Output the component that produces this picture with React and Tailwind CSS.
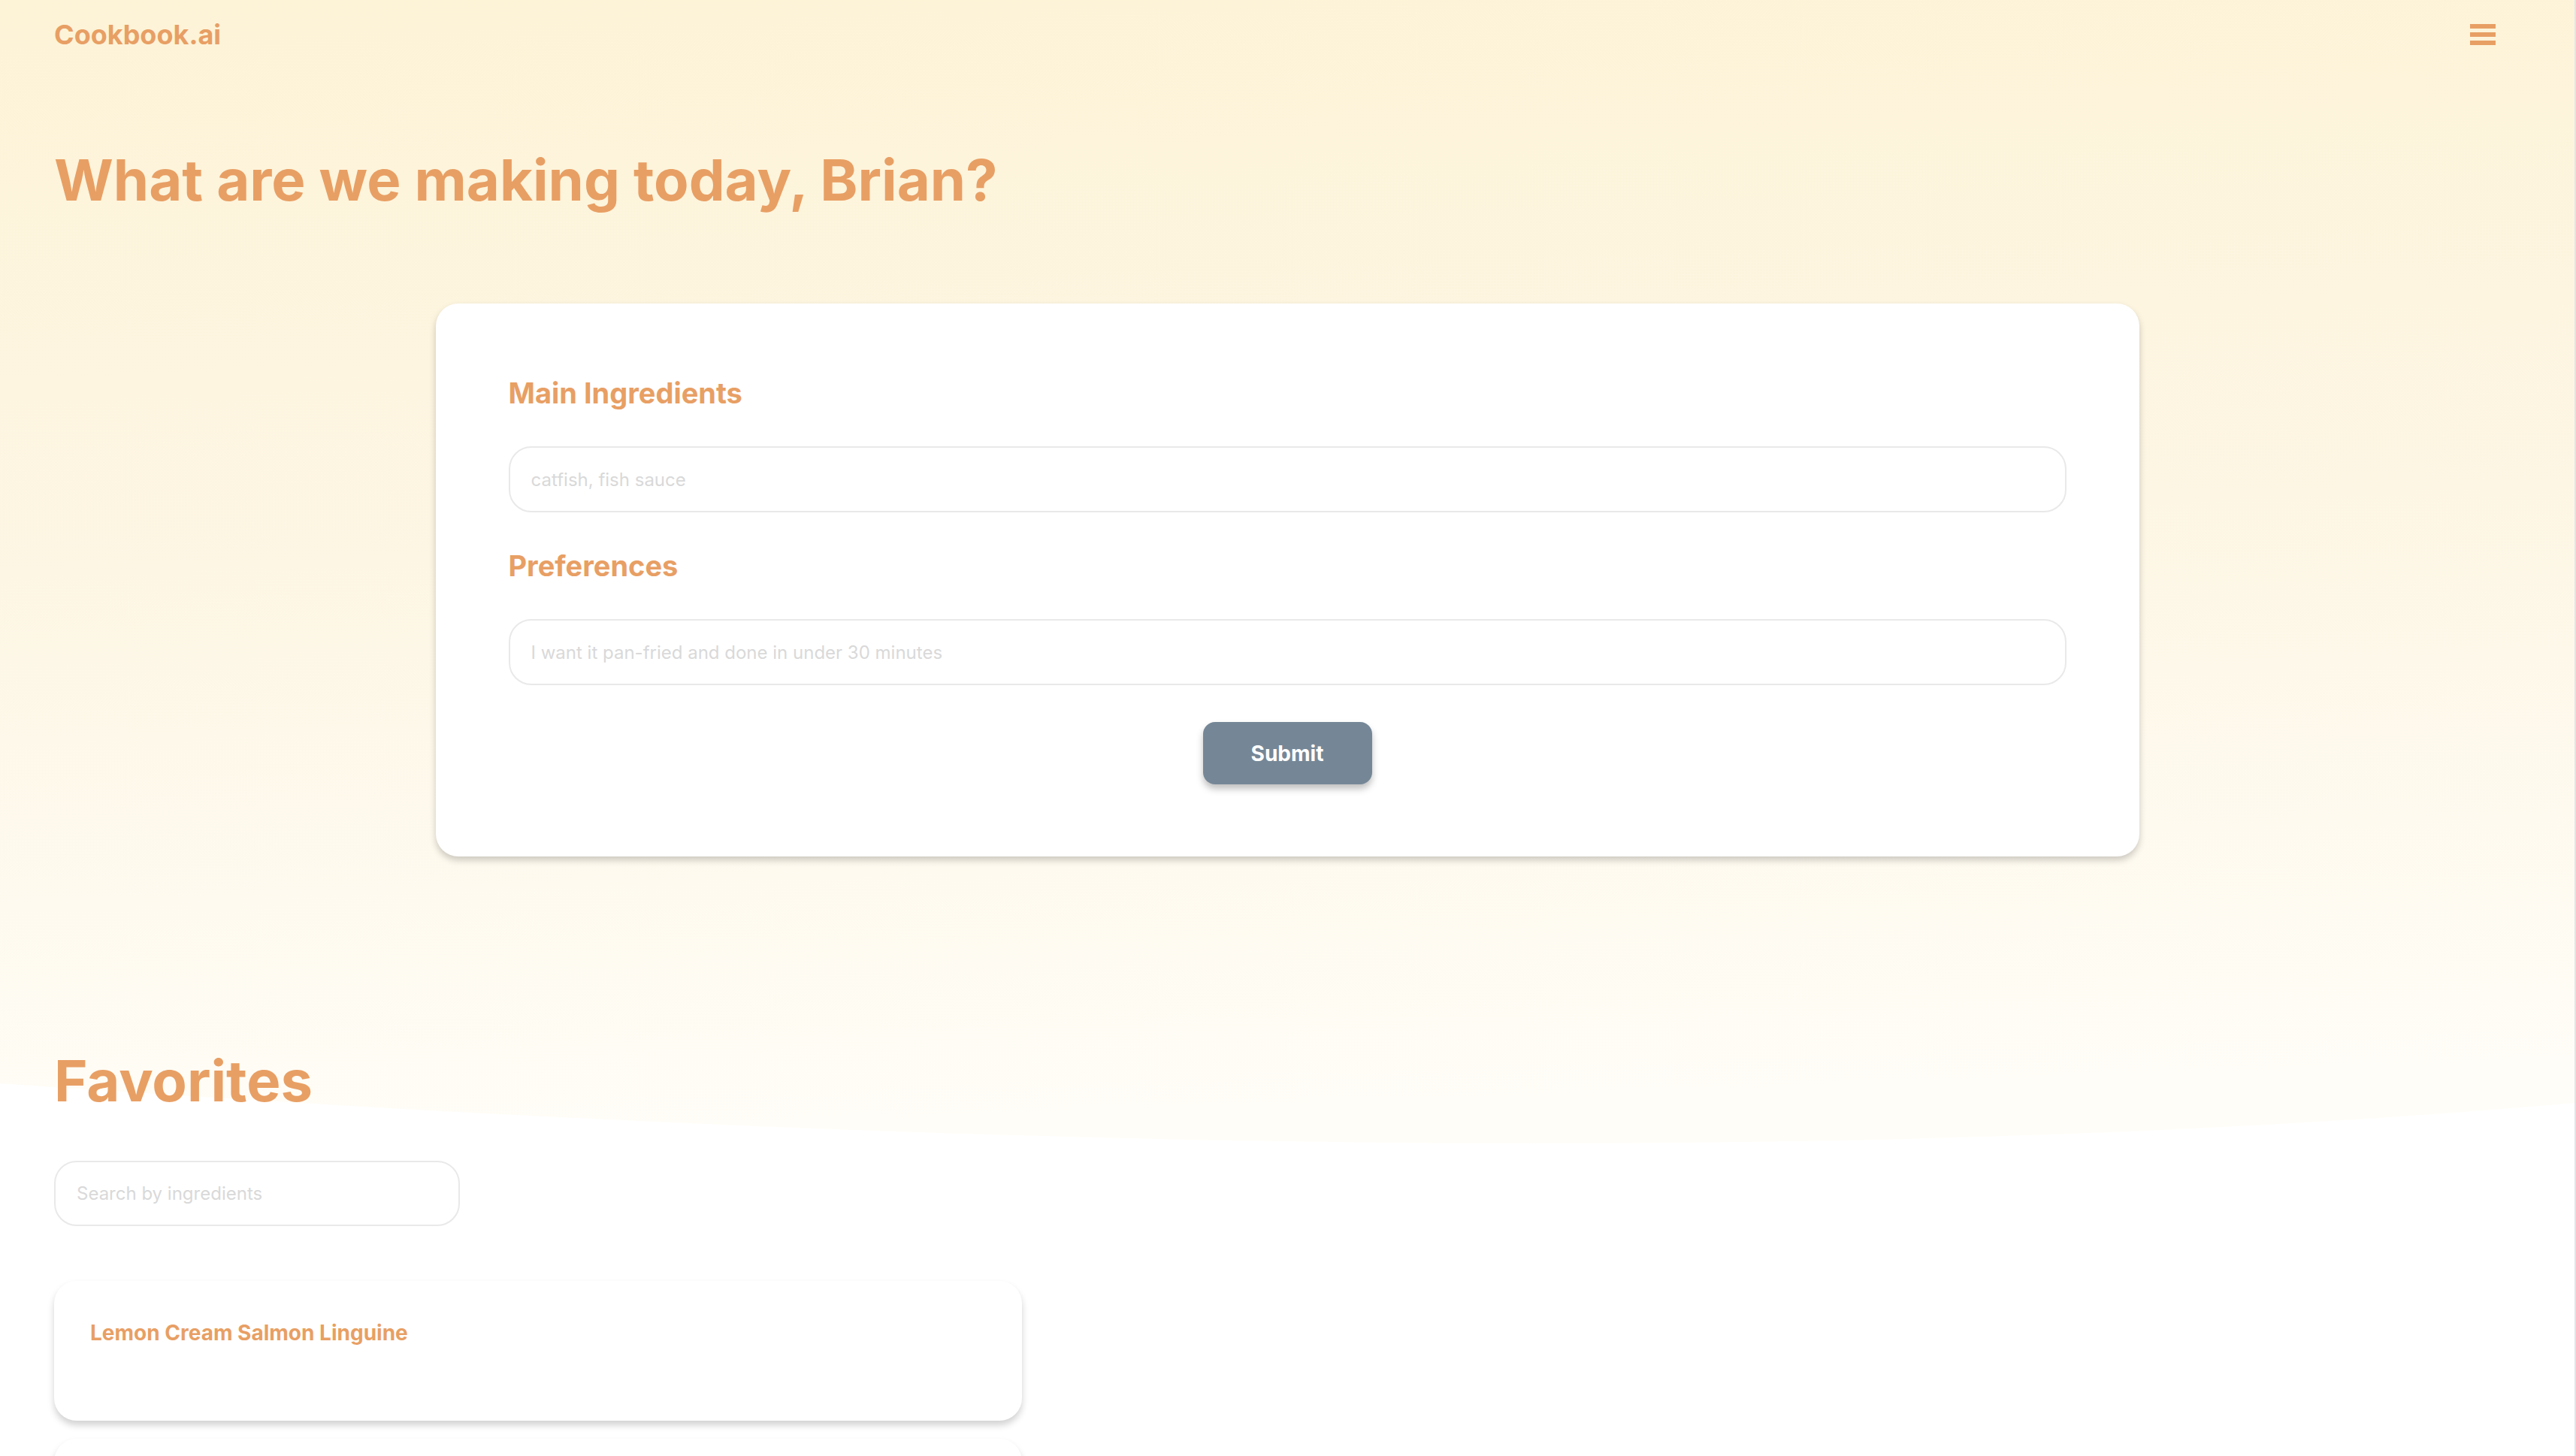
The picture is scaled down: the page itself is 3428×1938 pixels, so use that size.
import React from 'react';

const orange = 'text-[#e89f64]';

const Hamburger = () => (
  <svg width="34" height="28" viewBox="0 0 34 28" fill="#e89f64">
    <rect x="0" y="0" width="34" height="6" />
    <rect x="0" y="11" width="34" height="6" />
    <rect x="0" y="22" width="34" height="6" />
  </svg>
);

// Fondo crema con borde inferior curvo
const HeroBackground = () => (
  <svg
    className="absolute left-0 top-0 w-full h-[1590px]"
    viewBox="0 0 3426 1590"
    preserveAspectRatio="none"
  >
    <defs>
      <linearGradient id="hero" x1="0" y1="0" x2="0.08" y2="1">
        <stop offset="0" stopColor="#fdf3d7" />
        <stop offset="0.5" stopColor="#fdf6e4" />
        <stop offset="1" stopColor="#fffdf7" />
      </linearGradient>
    </defs>
    <path d="M0 0 H3426 V1468 Q2054 1587 0 1442 Z" fill="url(#hero)" />
  </svg>
);

const Field = ({ label, placeholder, className = '' }) => (
  <div className={className}>
    <h3 className={`text-[38px] leading-none font-bold ${orange}`}>{label}</h3>
    <input
      type="text"
      placeholder={placeholder}
      className="mt-[52px] w-full h-[88px] px-[28px] rounded-[30px] border-2 border-[#e9e9e9] bg-white text-[24px] text-slate-700 placeholder:text-[#d9d9d9] outline-none"
    />
  </div>
);

const RecipeCard = ({ title }) => (
  <div className="w-[1288px] h-[186px] bg-white rounded-[30px] shadow-[0_6px_10px_rgba(0,0,0,0.18)] px-[48px] pt-[55px]">
    {title && <h4 className={`text-[28px] leading-none font-bold ${orange}`}>{title}</h4>}
  </div>
);

export default function App() {
  return (
    <div className="relative min-h-screen bg-white border-r-2 border-[#e4e4e7] overflow-hidden font-['Inter',sans-serif]">
      <HeroBackground />

      <div className="relative">
        {/* --- Header --- */}
        <header className="h-[92px] flex items-center justify-between pl-[72px] pr-[105px]">
          <span className={`text-[36px] leading-none font-bold ${orange}`}>Cookbook.ai</span>
          <button className="p-0">
            <Hamburger />
          </button>
        </header>

        <h1 className={`mt-[109px] pl-[72px] text-[76px] leading-none font-bold ${orange}`}>
          What are we making today, Brian?
        </h1>

        {/* --- Formulario --- */}
        <div className="mt-[127px] mx-auto w-[2267px] bg-white rounded-[30px] shadow-[0_5px_10px_rgba(0,0,0,0.2)] px-[97px] pt-[100px] pb-[96px]">
          <Field label="Main Ingredients" placeholder="catfish, fish sauce" />
          <Field
            label="Preferences"
            placeholder="I want it pan-fried and done in under 30 minutes"
            className="mt-[52px]"
          />
          <div className="flex justify-center mt-[49px]">
            <button className="w-[225px] h-[83px] rounded-[16px] bg-[#758797] text-white text-[28px] font-bold shadow-[0_6px_10px_rgba(0,0,0,0.25)]">
              Submit
            </button>
          </div>
        </div>

        {/* --- Favoritos --- */}
        <section className="pl-[72px] mt-[260px]">
          <h2 className={`text-[76px] leading-none font-bold ${orange}`}>Favorites</h2>
          <input
            type="text"
            placeholder="Search by ingredients"
            className="mt-[69px] w-[540px] h-[87px] px-[28px] rounded-[30px] border-2 border-[#e9e9e9] bg-white text-[24px] placeholder:text-[#d9d9d9] outline-none"
          />
          <div className="mt-[73px] flex flex-col gap-[24px] pb-[60px]">
            <RecipeCard title="Lemon Cream Salmon Linguine" />
            <RecipeCard />
          </div>
        </section>
      </div>
    </div>
  );
}
